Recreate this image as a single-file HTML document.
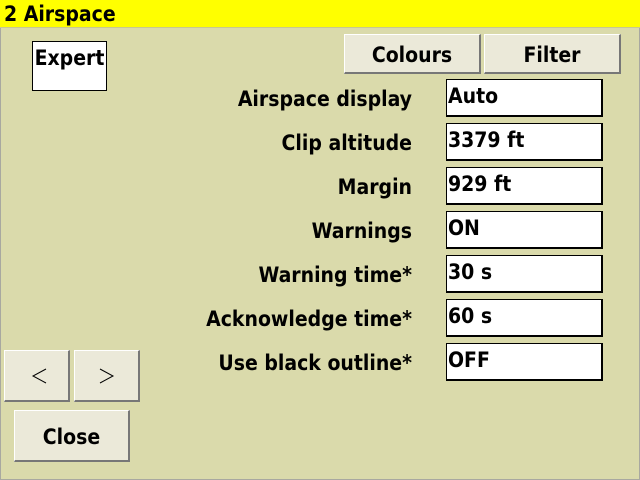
<!DOCTYPE html>
<html><head><meta charset="utf-8"><style>
*{margin:0;padding:0;box-sizing:border-box}
body{width:640px;height:480px;background:#dadaab;position:relative;overflow:hidden;font-family:"DejaVu Sans Condensed","DejaVu Sans","Liberation Sans",sans-serif;font-stretch:condensed;font-weight:bold;color:#000}
.frame{position:absolute;left:0;top:0;width:640px;height:480px;border:1px solid #a8a8a0;border-top:none}
.title{position:absolute;left:0;top:0;width:640px;height:28px;background:#ffff00;border-bottom:1px solid #c8c890;font-size:21px;line-height:28px;padding-left:4px}
.btn{position:absolute;background:#ebe9d9;border:1px solid #fff;border-right:2px solid #777;border-bottom:2px solid #777;text-align:center;font-size:21px}
.f{position:absolute;left:446px;width:157px;height:38px;background:#fff;border:2px solid #000;font-size:21px;line-height:32px;padding-left:1px;border-width:1px 2px 2px 1px}
.l{position:absolute;right:228px;font-size:21px;line-height:38px;white-space:nowrap}
.exp{position:absolute;left:32px;top:41px;width:75px;height:50px;background:#fff;border:1px solid #000;font-size:21px;text-align:center;line-height:32px}
</style></head><body>
<div class="frame"></div>
<div class="title">2 Airspace</div>
<div class="exp">Expert</div>
<div class="btn" style="left:344px;top:34px;width:137px;height:40px;line-height:40px">Colours</div>
<div class="btn" style="left:484px;top:34px;width:137px;height:40px;line-height:40px">Filter</div>

<div class="l" style="top:80px">Airspace display</div><div class="f" style="top:79px">Auto</div>
<div class="l" style="top:124px">Clip altitude</div><div class="f" style="top:123px">3379 ft</div>
<div class="l" style="top:168px">Margin</div><div class="f" style="top:167px">929 ft</div>
<div class="l" style="top:212px">Warnings</div><div class="f" style="top:211px">ON</div>
<div class="l" style="top:256px">Warning time*</div><div class="f" style="top:255px">30 s</div>
<div class="l" style="top:300px">Acknowledge time*</div><div class="f" style="top:299px">60 s</div>
<div class="l" style="top:344px">Use black outline*</div><div class="f" style="top:343px">OFF</div>

<div class="btn" style="left:4px;top:350px;width:66px;height:52px">
<svg width="66" height="52" style="position:absolute;left:-1px;top:-1px"><path d="M42 19 L29 26 L42 33" fill="none" stroke="#000" stroke-width="1"/></svg></div>
<div class="btn" style="left:74px;top:350px;width:66px;height:52px">
<svg width="66" height="52" style="position:absolute;left:-1px;top:-1px"><path d="M26 19 L39 26 L26 33" fill="none" stroke="#000" stroke-width="1"/></svg></div>
<div class="btn" style="left:14px;top:410px;width:116px;height:52px;line-height:52px">Close</div>
</body></html>
